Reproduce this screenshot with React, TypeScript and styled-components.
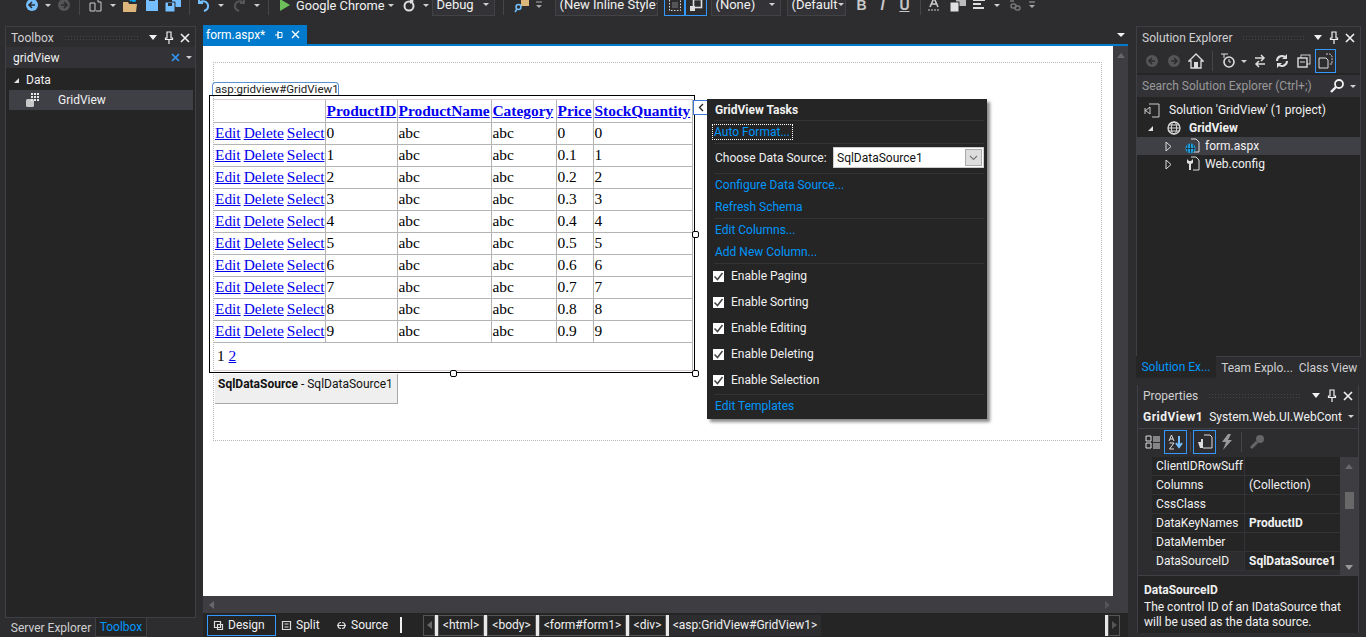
import React from "react";
import styled, { createGlobalStyle } from "styled-components";

const Global = createGlobalStyle`
  html, body { margin: 0; padding: 0; background: #2d2d30; }
  * { box-sizing: border-box; }
`;

const Root = styled.div`
  width: 1366px; height: 637px; overflow: hidden; background: #2d2d30; color: #f1f1f1;
  font: 12px Roboto, "Noto Sans", sans-serif; display: flex; flex-direction: column;
`;
const Toolbar = styled.div`
  height: 22px; margin-top: -6px; flex: none; display: flex; align-items: center; padding-left: 10px; white-space: nowrap;
`;
const Slot = styled.div<{ $w: number; $box?: boolean }>`
  width: ${p => p.$w}px; height: 20px; flex: none; display: flex; align-items: center; justify-content: center;
  ${p => p.$box ? "border: 1px solid #3399ff;" : ""}
`;
const TbSep = styled.div<{ $w: number }>`
  width: ${p => p.$w}px; height: 20px; flex: none; display: flex; justify-content: center;
  &::after { content: ""; width: 1px; height: 100%; background: #46464a; }
`;
const TbText = styled.span`
  font-size: 12.8px; color: #f1f1f1; flex: none;
`;
const Combo = styled.div<{ $w: number; $ml?: number }>`
  width: ${p => p.$w}px; margin-left: ${p => p.$ml ?? 0}px; height: 22px; margin-top: -1px; flex: none; background: #333337; border: 1px solid #434346;
  display: flex; align-items: center; justify-content: space-between; padding: 0 5px 0 3px; font-size: 13px; color: #f1f1f1; overflow: hidden;
`;
const Caret = styled.span`
  width: 0; height: 0; flex: none; border-left: 3px solid transparent; border-right: 3px solid transparent; border-top: 3px solid #d0d0d0;
`;
const Main = styled.div`
  flex: 1; min-height: 0; display: flex; margin-top: 10px; padding-left: 5px;
`;
const LeftCol = styled.div`
  width: 191px; flex: none; display: flex; flex-direction: column;
`;
const Panel = styled.div`
  flex: 1; min-height: 0; background: #252526; border: 1px solid #3f3f46; display: flex; flex-direction: column;
`;
const TitleBar = styled.div`
  height: 20px; flex: none; background: #2d2d30; display: flex; align-items: center; padding: 1px 5px 0 5px; color: #d0d0d0; gap: 5px;
`;
const Gripper = styled.div`
  flex: 1; height: 5px; margin: 0 4px 0 5px;
  background-image: radial-gradient(#46464a 0.7px, transparent 0.8px); background-size: 3px 3px;
`;
const PinBtns = styled.div`
  display: flex; align-items: center; gap: 6px; flex: none;
`;
const SearchBox = styled.div`
  height: 21px; flex: none; background: #333337; display: flex; align-items: center; justify-content: space-between;
  padding: 0 3px 0 7px; color: #f1f1f1;
`;
const DataHead = styled.div`
  margin-top: 2px; height: 20px; display: flex; align-items: center; gap: 6px; padding-left: 7px; color: #f1f1f1;
`;
const ToolRow = styled.div`
  height: 20px; margin: 0 2px 0 3px; background: #3f3f46; display: flex; align-items: center; padding-left: 16px; gap: 17px;
`;
const BottomTabs = styled.div`
  height: 19px; flex: none; display: flex; color: #d0d0d0;
`;
const BottomTab = styled.div<{ $active?: boolean; $w: number }>`
  width: ${p => p.$w}px; display: flex; align-items: center; justify-content: center;
  ${p => p.$active ? "background:#252526;color:#0097fb;border:1px solid #3f3f46;border-top:none;" : "padding-left:2px;"}
`;
const Editor = styled.div`
  width: 925px; flex: none; margin-left: 7px; display: flex; flex-direction: column; margin-top: -1px;
`;
const TabWell = styled.div`
  height: 19px; flex: none; display: flex; align-items: stretch; justify-content: space-between; padding-right: 3px;
`;
const DocTab = styled.div`
  width: 104px; background: #007acc; color: #fff; display: flex; align-items: center; padding: 0 5px 0 3px; justify-content: space-between; font-size: 12px;
`;
const DocIcons = styled.div`
  display: flex; align-items: center; gap: 7px; margin-right: 2px;
`;
const WellArrow = styled.div`
  display: flex; align-items: center;
  & > span { border-left-width: 4px; border-right-width: 4px; border-top: 4px solid #f1f1f1; }
`;
const BlueRule = styled.div`
  height: 2px; flex: none; background: #007acc;
`;
const DesignRow = styled.div`
  height: 550px; flex: none; display: flex;
`;
const Surface = styled.div`
  width: 910px; flex: none; background: #fff; padding: 16px 11px 0 10px;
`;
const VScroll = styled.div`
  flex: 1; background: #3e3e42; display: flex; justify-content: center; padding-top: 7px;
`;
const UpTri = styled.span`
  width: 0; height: 0; border-left: 4px solid transparent; border-right: 4px solid transparent; border-bottom: 5px solid #68686b;
`;
const Frame = styled.div`
  height: 379px; border: 1px dotted #b9b9b9; padding-top: 19px; position: relative;
`;
const TagLabel = styled.div`
  width: 127px; height: 14px; margin-left: -2px; border: 1px solid #5b8fd6; border-bottom: none; border-radius: 4px 4px 0 0; background: #fff;
  color: #222; font-size: 11.5px; line-height: 13px; padding-left: 2px; white-space: nowrap; overflow: hidden;
`;
const GridWrap = styled.div`
  position: relative; width: 480px; margin-top: 3px; margin-left: -1px; border-top: 1px solid #dccfd2; border-bottom: 1px solid #dccfd2; border-right: 1px solid #dccfd2;
`;
const SelectBox = styled.div`
  position: absolute; left: -4px; top: -5px; right: -3px; bottom: -3px; border: 1px solid #000; pointer-events: none;
`;
const Handle = styled.span<{ $l: string; $t: string }>`
  position: absolute; left: ${p => p.$l}; top: ${p => p.$t}; width: 7px; height: 7px; margin: -4px 0 0 -4px; background: #fff; border: 1px solid #000; border-radius: 2px;
`;
const Grid = styled.table`
  border-collapse: collapse; table-layout: fixed; width: 479px; font: 15.4px "Liberation Serif", serif; color: #000;
`;
const Th = styled.th<{ $w: number }>`
  width: ${p => p.$w}px; height: 22px; padding: 1px 1px 0; border: 1px solid #b4b4b4; border-top: none; text-align: left; white-space: nowrap; overflow: hidden;
  &:first-child { border-left: none; }
`;
const Td = styled.td`
  height: 22px; padding: 0 1px; border: 1px solid #b4b4b4; white-space: nowrap; overflow: hidden;
  &:first-child { border-left: none; padding-left: 2px; }
`;
const PagerCell = styled.td`
  height: 28px; padding: 0 0 0 4px; border: 1px solid #b4b4b4; border-left: none; border-bottom: none;
`;
const L = styled.span`
  color: #0000ee; text-decoration: underline; margin-right: 3px; &:last-child { margin-right: 0; }
`;
const SqlBox = styled.div`
  width: 183px; height: 30px; margin-top: 3px; margin-left: 1px; background: #efefef; border-right: 1px solid #a9a9a9; border-bottom: 1px solid #a9a9a9;
  font-size: 12px; color: #111; padding: 3px 0 0 3px; white-space: nowrap;
`;
const TasksToggle = styled.div`
  position: absolute; left: 480px; top: 0; width: 15px; height: 15px; background: #fff; border: 1px solid #3b78d0; display: flex; align-items: center; justify-content: center;
`;
const Tasks = styled.div`
  position: absolute; left: 494px; top: -1px; width: 280px; height: 320px; background: #252526; box-shadow: 3px 3px 3px #8a8a8a;
  padding: 1px 3px 0 8px; color: #f1f1f1; display: flex; flex-direction: column;
`;
const TaskTitle = styled.div`
  height: 20px; display: flex; align-items: center; font-weight: 700; font-size: 12px; color: #f1f1f1;
`;
const TaskSep = styled.div`
  height: 1px; margin-left: -1px; background: #333337; flex: none;
`;
const TaskLink = styled.div<{ $h?: number; $focus?: boolean }>`
  height: ${p => p.$h ?? 22}px; display: flex; align-items: center; color: #0097fb; flex: none;
  & > span { ${p => p.$focus ? "outline: 1px dotted #fff; outline-offset: 0; padding: 0 2px 0 1px; margin-left: -2px;" : ""} }
`;
const ChooseRow = styled.div`
  height: 29px; display: flex; align-items: center; justify-content: space-between; flex: none; color: #f1f1f1; padding-bottom: 2px;
`;
const TaskCombo = styled.div`
  width: 151px; height: 21px; background: #fff; border: 1px solid #ccc; color: #111; display: flex; align-items: center; justify-content: space-between; padding: 1px 1px 1px 3px;
`;
const TaskComboBtn = styled.div`
  width: 17px; height: 17px; background: #ddd; border: 1px solid #aaa; display: flex; align-items: center; justify-content: center;
`;
const CheckRow = styled.div`
  height: 26px; display: flex; align-items: center; gap: 7px; flex: none; margin-left: -2px; padding-bottom: 2px; color: #f1f1f1;
`;
const Check = styled.span`
  width: 11px; height: 11px; background: #fff; display: flex; align-items: center; justify-content: center; flex: none;
`;
const HScroll = styled.div`
  height: 17px; flex: none; background: #3e3e42; display: flex; align-items: center; justify-content: space-between; padding: 0 18px 0 6px;
`;
const HTri = styled.span<{ $right?: boolean }>`
  width: 0; height: 0; border-top: 4px solid transparent; border-bottom: 4px solid transparent;
  ${p => p.$right ? "border-left: 5px solid #555558;" : "border-right: 5px solid #68686b;"}
`;
const ViewBar = styled.div`
  flex: 1; min-height: 0; background: #252526; display: flex; align-items: center; padding-left: 4px; color: #f1f1f1;
`;
const ViewBtn = styled.div<{ $w: number; $active?: boolean }>`
  width: ${p => p.$w}px; height: 21px; flex: none; display: flex; align-items: center; gap: 4px; padding-left: 5px;
  ${p => p.$active ? "border: 1px solid #3399ff;" : ""}
`;
const Caretbar = styled.div`
  width: 2px; height: 16px; background: #f1f1f1; margin: 0 21px 0 2px; flex: none;
`;
const NavBox = styled.div`
  width: 12px; height: 21px; flex: none; border: 1px solid #555; display: flex; align-items: center; justify-content: center;
`;
const Crumb = styled.div<{ $w: number; $sel?: boolean }>`
  width: ${p => p.$w}px; height: 21px; flex: none; display: flex; align-items: center; justify-content: center; white-space: nowrap;
  ${p => p.$sel ? "background:#2d2d30;" : "border:1px solid #555;"}
`;
const CrumbGap = styled.div`
  width: 3px; height: 21px; background: #e8e8e8; flex: none;
`;
const Spacer = styled.div`
  flex: 1;
`;
const RightCol = styled.div`
  width: 225px; flex: none; margin-left: 8px; display: flex; flex-direction: column;
`;
const SolPanel = styled.div`
  height: 331px; flex: none; background: #252526; border: 1px solid #3f3f46; display: flex; flex-direction: column;
`;
const SolTools = styled.div`
  height: 26px; flex: none; background: #2d2d30; display: flex; align-items: center; padding: 2px 0 0 4px;
`;
const SolSearch = styled.div`
  height: 22px; margin-top: 2px; flex: none; background: #333337; display: flex; align-items: center; justify-content: space-between; color: #999; padding: 0 4px 0 5px;
`;
const Tree = styled.div`
  padding-top: 4px; display: flex; flex-direction: column;
`;
const TreeRow = styled.div<{ $pad: number; $sel?: boolean; $bold?: boolean }>`
  height: 18px; display: flex; align-items: center; padding-left: ${p => p.$pad}px; gap: 4px; white-space: nowrap; color: #f1f1f1;
  ${p => p.$sel ? "background:#3f3f46;" : ""} ${p => p.$bold ? "font-weight:700;" : ""}
`;
const TreeGap = styled.span<{ $w: number }>`
  width: ${p => p.$w}px; flex: none;
`;
const RightTabs = styled.div`
  height: 21px; flex: none; display: flex; color: #d0d0d0;
`;
const RightTab = styled.div<{ $w: number; $active?: boolean }>`
  width: ${p => p.$w}px; display: flex; align-items: center; justify-content: center; flex: none;
  ${p => p.$active ? "background:#252526;color:#0097fb;margin-top:-1px;" : ""}
`;
const PropPanel = styled.div`
  height: 248px; flex: none; margin: 7px 2px 0 1px; border-left: 1px solid #3f3f46; border-right: 1px solid #3f3f46; background: #252526; display: flex; flex-direction: column;
`;
const ObjRow = styled.div`
  height: 24px; flex: none; background: #2d2d30; border-bottom: 1px solid #3f3f46; display: flex; align-items: center; gap: 6px; padding: 0 4px 0 5px; white-space: nowrap; overflow: hidden;
`;
const ObjName = styled.b`
  font-weight: 700; letter-spacing: .5px; flex: none;
`;
const ObjType = styled.div`
  flex: 1; min-width: 0; overflow: hidden; color: #f1f1f1;
`;
const PropTools = styled.div`
  height: 28px; flex: none; background: #2d2d30; display: flex; align-items: center; padding: 0 0 3px 3px;
`;
const PropBody = styled.div`
  height: 118px; flex: none; display: flex; background: #2d2d30;
`;
const PropGrid = styled.div`
  flex: 1; margin-left: 14px; display: flex; flex-direction: column; overflow: hidden;
`;
const PropRow = styled.div`
  height: 19px; flex: none; display: grid; grid-template-columns: 92px 1fr; background: #333337; gap: 1px; padding-bottom: 1px;
`;
const PropCell = styled.div<{ $bold?: boolean; $sel?: boolean }>`
  background: ${p => p.$sel ? "#2d2d30" : "#252526"}; padding-left: 4px; color: #f1f1f1; display: flex; align-items: center; white-space: nowrap; overflow: hidden;
  ${p => p.$bold ? "font-weight:700;" : ""}
`;
const PropScroll = styled.div`
  width: 18px; flex: none; background: #3e3e42; display: flex; flex-direction: column; align-items: center; padding: 7px 0 5px;
`;
const Thumb = styled.div`
  width: 9px; height: 17px; margin-top: 23px; margin-bottom: auto; background: #686868;
`;
const DownTri = styled.span`
  width: 0; height: 0; border-left: 4px solid transparent; border-right: 4px solid transparent; border-top: 5px solid #999;
`;
const Desc = styled.div`
  flex: 1; border-top: 1px solid #3f3f46; padding: 7px 4px 0 6px; line-height: 15px; color: #f1f1f1;
  & > b { display: block; font-weight: 700; margin-bottom: 2px; }
`;

const Sv: React.FC<{ w?: number; h?: number; vb?: string; children: React.ReactNode }> = ({ w = 16, h = 16, vb, children }) => (
  <svg width={w} height={h} viewBox={vb ?? `0 0 ${w} ${h}`} fill="none" style={{ flex: "none", display: "block" }}>{children}</svg>
);

const CircleArrow = ({ c, right }: { c: string; right?: boolean }) => (
  <Sv w={14} h={14}>
    <circle cx="7" cy="7" r="6" fill={c} />
    <path d={right ? "M4 7h5M7 4l3 3-3 3" : "M10 7H5M7 4L4 7l3 3"} stroke="#2d2d30" strokeWidth="1.6" />
  </Sv>
);
const NewFile = () => (
  <Sv><path d="M4 2h6v3h3v9H8" stroke="#ccc" /><path d="M6 6H2v8h5V6z" stroke="#ccc" /><path d="M11 1l2 2" stroke="#e3b568" /></Sv>
);
const Folder = () => (
  <Sv w={17} h={16}><path d="M1 5h5l1 2h8l-1 8H1V5z" fill="#dcb67a" /><path d="M8 4c2-2 4-2 5 0M13 1v3h-3" stroke="#00aeff" strokeWidth="1.5" /></Sv>
);
const Save = () => (
  <Sv w={14} h={16}><path d="M1 0h12v14H1z" fill="#75beff" /><rect x="4" y="0" width="6" height="4" fill="#2d2d30" /></Sv>
);
const SaveAll = () => (
  <Sv w={18} h={16}><path d="M8 0h9v10H8z" fill="#75beff" /><path d="M1 5h10v10H1z" fill="#75beff" stroke="#2d2d30" /><rect x="4" y="6" width="4" height="3" fill="#2d2d30" /></Sv>
);
const Undo = ({ c }: { c: string }) => (
  <Sv w={14} h={14}><path d="M2 1v4h4M2 5c3-3 8-2 9 2 .5 3-1 5-4 6" stroke={c} strokeWidth="2" /></Sv>
);
const Play = () => <Sv w={11} h={12}><path d="M1 0l10 6-10 6z" fill="#6cbf5a" /></Sv>;
const Refresh = () => (
  <Sv w={14} h={14}><circle cx="7" cy="8" r="4.5" stroke="#ddd" strokeWidth="2" /><path d="M8 0v6l4-3z" fill="#ddd" /></Sv>
);
const FindIco = () => (
  <Sv><rect x="7" y="0" width="8" height="9" fill="#dcb67a" /><circle cx="4.5" cy="10" r="2.5" stroke="#75beff" strokeWidth="1.5" /><path d="M3 12l-2 3" stroke="#75beff" strokeWidth="1.5" /></Sv>
);
const Overflow = () => (
  <Sv w={8} h={8}><path d="M1 1h6" stroke="#aaa" /><path d="M1 4h6l-3 3z" fill="#aaa" /></Sv>
);
const BoxDots = () => (
  <Sv w={14} h={14}><rect x="1.5" y="1.5" width="11" height="11" stroke="#ddd" strokeDasharray="1.5 1.5" /><rect x="4" y="4" width="6" height="6" fill="#555" /></Sv>
);
const BoxPos = () => (
  <Sv w={14} h={14}><rect x="4.5" y="1.5" width="8" height="8" stroke="#ddd" strokeWidth="1.6" /><rect x="1" y="8" width="5" height="5" fill="#ddd" /></Sv>
);
const Fmt = ({ ch, it, un }: { ch: string; it?: boolean; un?: boolean }) => (
  <span style={{ color: "#c8c8c8", fontWeight: 700, fontSize: 14, fontStyle: it ? "italic" : "normal", textDecoration: un ? "underline" : "none", fontFamily: "Liberation Sans, sans-serif" }}>{ch}</span>
);
const FontColor = () => (
  <Sv><path d="M4 10L8 1l4 9M6 7h4" stroke="#ccc" strokeWidth="1.6" /><path d="M2 13h12" stroke="#ccc" strokeDasharray="2 1" /></Sv>
);
const BgIco = () => (
  <Sv w={18} h={14}><rect x="7" y="0" width="10" height="8" fill="#bbb" /><rect x="1" y="4" width="9" height="10" fill="#e0e0e0" stroke="#2d2d30" /></Sv>
);
const AlignIco = () => (
  <Sv w={14} h={12}><path d="M1 1h12M1 5h8M1 9h11" stroke="#ddd" strokeWidth="2" /></Sv>
);
const LinkIco = () => (
  <Sv><path d="M3 1h6M3 4h4" stroke="#666" strokeWidth="2" /><rect x="4" y="7" width="5" height="4" rx="2" stroke="#777" strokeWidth="1.5" /><rect x="8" y="9" width="5" height="4" rx="2" stroke="#777" strokeWidth="1.5" /></Sv>
);
const TitleArrow = () => <Sv w={10} h={6}><path d="M1 0h8L5 5z" fill="#f1f1f1" /></Sv>;
const Pin = () => (
  <Sv w={10} h={13}><path d="M3 1h4v6h1.5v1.5h-7V7H3zM5 8.5V13" stroke="#f1f1f1" strokeWidth="1.2" /></Sv>
);
const Close = ({ s = 10 }: { s?: number }) => (
  <Sv w={s} h={s}><path d={`M1 1L${s - 1} ${s - 1}M${s - 1} 1L1 ${s - 1}`} stroke="#f1f1f1" strokeWidth="1.6" /></Sv>
);
const Titlebar = ({ title }: { title: string }) => (
  <TitleBar>
    <span>{title}</span>
    <Gripper />
    <PinBtns><TitleArrow /><Pin /><Close /></PinBtns>
  </TitleBar>
);
const GridIco = () => (
  <Sv w={16} h={15}>
    <rect x="1" y="6" width="8" height="8" rx="1.5" fill="#c8c8c8" />
    {[5, 8, 11].map(x => [1, 4, 7].map(y => <rect key={`${x}${y}`} x={x + 1} y={y - 1} width="2" height="2" fill="#e8e8e8" />))}
  </Sv>
);
const TriDown = () => <Sv w={7} h={7}><path d="M6 1v5H1z" fill="#e0e0e0" /></Sv>;
const TriOpen = () => <Sv w={7} h={11}><path d="M1 1l5 4.5L1 10z" stroke="#ddd" /></Sv>;
const Chev = () => <Sv w={6} h={9}><path d="M5 1L1.5 4.5 5 8" stroke="#222" strokeWidth="1.3" /></Sv>;
const DownChev = () => <Sv w={9} h={6}><path d="M1 1l3.5 3.5L8 1" stroke="#777" strokeWidth="1.2" /></Sv>;
const Tick = () => <Sv w={11} h={11}><path d="M1.5 5.5L4.5 8.5 9.5 2" stroke="#444" strokeWidth="1.5" /></Sv>;
const Globe = ({ c = "#ddd", s = 14 }: { c?: string; s?: number }) => (
  <Sv w={s} h={s} vb="0 0 14 14"><circle cx="7" cy="7" r="6" stroke={c} strokeWidth="1.3" /><ellipse cx="7" cy="7" rx="2.7" ry="6" stroke={c} /><path d="M1 7h12M2 4h10M2 10h10" stroke={c} /></Sv>
);
const SolIco = () => (
  <Sv w={17} h={15}><path d="M5 1h10v13H8" stroke="#ccc" /><path d="M1 7l5 4V4L1 8M1 5v6" stroke="#ccc" /></Sv>
);
const FormIco = () => (
  <Sv><path d="M6 1h5l3 3v10H8" stroke="#ddd" /><circle cx="5.5" cy="10.5" r="5" fill="#1ba1e2" /><path d="M1 10.5h9M5.5 5.5v10M3 6.5c-1 3-1 5 0 8M8 6.5c1 3 1 5 0 8" stroke="#252526" strokeWidth=".8" /></Sv>
);
const WebCfg = () => (
  <Sv><path d="M6 1h5l3 3v10H8" stroke="#ddd" /><path d="M2 3v4l2 1v6h2V8l2-1V3L6 5H4z" fill="#ddd" /></Sv>
);
const HomeIco = () => <Sv><path d="M8 1L1 8h2v7h10V8h2z" stroke="#ddd" strokeWidth="1.3" /><rect x="6" y="9" width="4" height="6" fill="#ddd" /></Sv>;
const ClockIco = () => (
  <Sv w={14} h={16}><circle cx="8" cy="9" r="5" stroke="#ddd" strokeWidth="1.6" /><path d="M0 1h7M3 1v4M8 6v3h2" stroke="#ddd" /></Sv>
);
const SyncIco = () => <Sv><path d="M3 5h9M9 2l3 3-3 3M13 11H4M7 8l-3 3 3 3" stroke="#ddd" strokeWidth="1.5" /></Sv>;
const RefreshDoc = () => <Sv><path d="M3 8a5 5 0 0 1 9-3M13 8a5 5 0 0 1-9 3" stroke="#ddd" strokeWidth="2" /><path d="M13 1v5H8M3 15v-5h5" fill="#ddd" /></Sv>;
const CollapseIco = () => <Sv><rect x="5" y="2" width="9" height="9" stroke="#ccc" /><rect x="2" y="5" width="9" height="9" fill="#2d2d30" stroke="#ddd" strokeWidth="1.4" /><path d="M4 9h5" stroke="#ddd" /></Sv>;
const ShowAll = () => <Sv w={16} h={16}><path d="M1 5h7l2 2v8H1z" stroke="#ddd" /><path d="M8 1h4l2 2v8h-3" stroke="#ccc" strokeDasharray="2 1" /></Sv>;
const SearchIco = () => <Sv w={14} h={14}><circle cx="9" cy="5" r="4" stroke="#f1f1f1" strokeWidth="1.8" /><path d="M6 8l-5 5" stroke="#f1f1f1" strokeWidth="2.4" /></Sv>;
const CatIco = () => <Sv><path d="M1 2h5v5H1zM1 9h5v5H1z" stroke="#ddd" /><path d="M8 3h7M8 5h7M8 7h7M8 10h7M8 12h7M8 14h7" stroke="#ddd" /></Sv>;
const AzIco = () => (
  <Sv><path d="M1 7l2.5-6L6 7M2 5h3M1.5 9H6l-4.5 6H6" stroke="#ddd" /><path d="M11 2v11M8 9l3 4 3-4" stroke="#75beff" strokeWidth="2" /></Sv>
);
const PropIco = () => <Sv><path d="M7 1h6l2 2v11H6" stroke="#ddd" /><path d="M1 8h3V5h2v9H3z" fill="#ddd" /></Sv>;
const BoltIco = () => <Sv w={12} h={16}><path d="M7 0L1 8h4l-3 8 9-10H7l3-6z" fill="#999" /></Sv>;
const KeyIco = () => <Sv><circle cx="11" cy="5" r="4" fill="#666" /><path d="M8 8l-6 6" stroke="#666" strokeWidth="3" /></Sv>;
const Ic = styled.div<{ $w: number }>`
  width: ${p => p.$w}px; flex: none; display: flex; justify-content: center; align-items: center;
`;
const SelBtn = styled.div<{ $w: number; $ml?: number; $h?: number }>`
  width: ${p => p.$w}px; height: ${p => p.$h ?? 24}px; margin-left: ${p => p.$ml ?? 0}px; flex: none; border: 1px solid #3399ff; display: flex; align-items: center; justify-content: center;
`;
const ViewIco = ({ d }: { d: string }) => <Sv w={11} h={11}><path d={d} stroke="#ddd" strokeWidth="1.2" /></Sv>;

const rows = [0, 1, 2, 3, 4, 5, 6, 7, 8, 9];
const cols: [string, number][] = [["", 112], ["ProductID", 72], ["ProductName", 94], ["Category", 65], ["Price", 37], ["StockQuantity", 99]];
const checks = ["Enable Paging", "Enable Sorting", "Enable Editing", "Enable Deleting", "Enable Selection"];
const props: [string, string, boolean?, boolean?][] = [
  ["ClientIDRowSuff", ""], ["Columns", "(Collection)"], ["CssClass", ""],
  ["DataKeyNames", "ProductID", true], ["DataMember", ""], ["DataSourceID", "SqlDataSource1", true, true],
];

export default function App() {
  return (
    <Root>
      <Global />
      <Toolbar>
        <Slot $w={12} />
        <Slot $w={20}><CircleArrow c="#75beff" /></Slot>
        <Slot $w={12}><Caret /></Slot>
        <Slot $w={20}><CircleArrow c="#555558" right /></Slot>
        <TbSep $w={10} />
        <Slot $w={24}><NewFile /></Slot>
        <Slot $w={10}><Caret /></Slot>
        <Slot $w={24}><Folder /></Slot>
        <Slot $w={20}><Save /></Slot>
        <Slot $w={22}><SaveAll /></Slot>
        <TbSep $w={10} />
        <Slot $w={20}><Undo c="#75beff" /></Slot>
        <Slot $w={14}><Caret /></Slot>
        <Slot $w={22}><span style={{ transform: "scaleX(-1)" }}><Undo c="#555558" /></span></Slot>
        <Slot $w={14}><Caret /></Slot>
        <TbSep $w={8} />
        <Slot $w={24}><Play /></Slot>
        <TbText>Google Chrome</TbText>
        <Slot $w={14}><Caret /></Slot>
        <Slot $w={22}><Refresh /></Slot>
        <Slot $w={12}><Caret /></Slot>
        <Combo $w={63}>Debug<Caret /></Combo>
        <TbSep $w={16} />
        <Slot $w={22}><FindIco /></Slot>
        <Slot $w={12}><Overflow /></Slot>
        <Combo $w={103} $ml={10}>(New Inline Style<Caret /></Combo>
        <SelBtn $w={21} $ml={6} $h={22}><BoxDots /></SelBtn>
        <SelBtn $w={22} $h={22}><BoxPos /></SelBtn>
        <Combo $w={70} $ml={4}>(None)<Caret /></Combo>
        <Combo $w={59} $ml={6}>(Default<Caret /></Combo>
        <Ic $w={30}><Fmt ch="B" /></Ic>
        <Ic $w={12}><Fmt ch="I" it /></Ic>
        <Ic $w={32}><Fmt ch="U" un /></Ic>
        <TbSep $w={1} />
        <Ic $w={26}><FontColor /></Ic>
        <Ic $w={22}><BgIco /></Ic>
        <Ic $w={20}><AlignIco /></Ic>
        <Ic $w={16}><Caret /></Ic>
        <Ic $w={20}><LinkIco /></Ic>
        <Ic $w={14}><Overflow /></Ic>
      </Toolbar>
      <Main>
        <LeftCol>
          <Panel>
            <Titlebar title="Toolbox" />
            <SearchBox>
              <span>gridView</span>
              <PinBtns>
                <Sv w={9} h={9}><path d="M1 1l7 7M8 1L1 8" stroke="#3399ff" strokeWidth="1.6" /></Sv>
                <Caret />
              </PinBtns>
            </SearchBox>
            <DataHead><TriDown />Data</DataHead>
            <ToolRow><GridIco />GridView</ToolRow>
          </Panel>
          <BottomTabs>
            <BottomTab $w={90}>Server Explorer</BottomTab>
            <BottomTab $w={52} $active>Toolbox</BottomTab>
          </BottomTabs>
        </LeftCol>
        <Editor>
          <TabWell>
            <DocTab>
              <span>form.aspx*</span>
              <DocIcons>
                <Sv w={10} h={10}><path d="M1 5h3M4 2.5h4v5H4zM4 1v8" stroke="#fff" /></Sv>
                <Sv w={9} h={9}><path d="M1 1l7 7M8 1L1 8" stroke="#fff" strokeWidth="1.4" /></Sv>
              </DocIcons>
            </DocTab>
            <WellArrow><Caret /></WellArrow>
          </TabWell>
          <BlueRule />
          <DesignRow>
            <Surface>
              <Frame>
                <TagLabel>asp:gridview#GridView1</TagLabel>
                <GridWrap>
                  <Grid>
                    <thead>
                      <tr>
                        {cols.map(([n, w]) => <Th key={n} $w={w}>{n && <L>{n}</L>}</Th>)}
                      </tr>
                    </thead>
                    <tbody>
                      {rows.map(r => (
                        <tr key={r}>
                          <Td><L>Edit</L><L>Delete</L><L>Select</L></Td>
                          <Td>{r}</Td>
                          <Td>abc</Td>
                          <Td>abc</Td>
                          <Td>{r === 0 ? "0" : `0.${r}`}</Td>
                          <Td>{r}</Td>
                        </tr>
                      ))}
                      <tr><PagerCell colSpan={6}>1 <L>2</L></PagerCell></tr>
                    </tbody>
                  </Grid>
                  <SelectBox />
                  <Handle $l="483px" $t="135px" />
                  <Handle $l="241px" $t="274px" />
                  <Handle $l="483px" $t="274px" />
                  <TasksToggle><Chev /></TasksToggle>
                  <Tasks>
                    <TaskTitle>GridView Tasks</TaskTitle>
                    <TaskSep />
                    <TaskLink $focus><span>Auto Format...</span></TaskLink>
                    <TaskSep />
                    <ChooseRow>
                      <span>Choose Data Source:</span>
                      <TaskCombo>SqlDataSource1<TaskComboBtn><DownChev /></TaskComboBtn></TaskCombo>
                    </ChooseRow>
                    <TaskSep />
                    <TaskLink><span>Configure Data Source...</span></TaskLink>
                    <TaskLink><span>Refresh Schema</span></TaskLink>
                    <TaskSep />
                    <TaskLink><span>Edit Columns...</span></TaskLink>
                    <TaskLink><span>Add New Column...</span></TaskLink>
                    <TaskSep />
                    {checks.map(c => <CheckRow key={c}><Check><Tick /></Check>{c}</CheckRow>)}
                    <TaskSep />
                    <TaskLink $h={21}><span>Edit Templates</span></TaskLink>
                  </Tasks>
                </GridWrap>
                <SqlBox><b>SqlDataSource</b> - SqlDataSource1</SqlBox>
              </Frame>
            </Surface>
            <VScroll><UpTri /></VScroll>
          </DesignRow>
          <HScroll><HTri /><HTri $right /></HScroll>
          <ViewBar>
            <ViewBtn $w={69} $active><ViewIco d="M1.5 1.5h6v6h-6zM4.5 4.5h5v5h-5z" />Design</ViewBtn>
            <ViewBtn $w={55}><ViewIco d="M1.5 1.5h8v8h-8zM3.5 4h4M3.5 7h4" />Split</ViewBtn>
            <ViewBtn $w={67}><ViewIco d="M5 2.5a3 3 0 1 0 0 6M6 2.5a3 3 0 1 1 0 6M1 5.5h9" />Source</ViewBtn>
            <Caretbar />
            <NavBox><HTri /></NavBox>
            <CrumbGap />
            <Crumb $w={46}>&lt;html&gt;</Crumb>
            <CrumbGap />
            <Crumb $w={49}>&lt;body&gt;</Crumb>
            <CrumbGap />
            <Crumb $w={87}>&lt;form#form1&gt;</Crumb>
            <CrumbGap />
            <Crumb $w={37}>&lt;div&gt;</Crumb>
            <CrumbGap />
            <Crumb $w={152} $sel>&lt;asp:GridView#GridView1&gt;</Crumb>
            <Spacer />
            <CrumbGap />
            <NavBox><HTri $right /></NavBox>
            <TreeGap $w={8} />
          </ViewBar>
        </Editor>
        <RightCol>
          <SolPanel>
            <Titlebar title="Solution Explorer" />
            <SolTools>
              <Ic $w={22}><CircleArrow c="#555558" /></Ic>
              <Ic $w={22}><CircleArrow c="#555558" right /></Ic>
              <Ic $w={22}><HomeIco /></Ic>
              <TbSep $w={10} />
              <Ic $w={22}><ClockIco /></Ic>
              <Ic $w={10}><Caret /></Ic>
              <Ic $w={22}><SyncIco /></Ic>
              <Ic $w={22}><RefreshDoc /></Ic>
              <Ic $w={22}><CollapseIco /></Ic>
              <SelBtn $w={21}><ShowAll /></SelBtn>
            </SolTools>
            <SolSearch>
              <span>Search Solution Explorer (Ctrl+;)</span>
              <PinBtns><SearchIco /><Caret /></PinBtns>
            </SolSearch>
            <Tree>
              <TreeRow $pad={7}><SolIco /><TreeGap $w={0} />Solution 'GridView' (1 project)</TreeRow>
              <TreeRow $pad={10} $bold><TriDown /><TreeGap $w={5} /><Globe /><TreeGap $w={0} />GridView</TreeRow>
              <TreeRow $pad={28} $sel><TriOpen /><TreeGap $w={5} /><FormIco />form.aspx</TreeRow>
              <TreeRow $pad={28}><TriOpen /><TreeGap $w={5} /><WebCfg />Web.config</TreeRow>
            </Tree>
          </SolPanel>
          <RightTabs>
            <RightTab $w={80} $active>Solution Ex...</RightTab>
            <RightTab $w={82}>Team Explo...</RightTab>
            <RightTab $w={60}>Class View</RightTab>
          </RightTabs>
          <PropPanel>
            <Titlebar title="Properties" />
            <ObjRow><ObjName>GridView1</ObjName><ObjType>System.Web.UI.WebContr</ObjType><Caret /></ObjRow>
            <PropTools>
              <Ic $w={23}><CatIco /></Ic>
              <SelBtn $w={23}><AzIco /></SelBtn>
              <TbSep $w={6} />
              <SelBtn $w={23}><PropIco /></SelBtn>
              <Ic $w={22}><BoltIco /></Ic>
              <TbSep $w={6} />
              <Ic $w={26}><KeyIco /></Ic>
            </PropTools>
            <PropBody>
              <PropGrid>
                {props.map(([n, v, b, s]) => (
                  <PropRow key={n}>
                    <PropCell $sel={s}>{n}</PropCell>
                    <PropCell $bold={b}>{v}</PropCell>
                  </PropRow>
                ))}
              </PropGrid>
              <PropScroll><UpTri /><Thumb /><DownTri /></PropScroll>
            </PropBody>
            <Desc>
              <b>DataSourceID</b>
              The control ID of an IDataSource that<br />will be used as the data source.
            </Desc>
          </PropPanel>
        </RightCol>
      </Main>
    </Root>
  );
}
